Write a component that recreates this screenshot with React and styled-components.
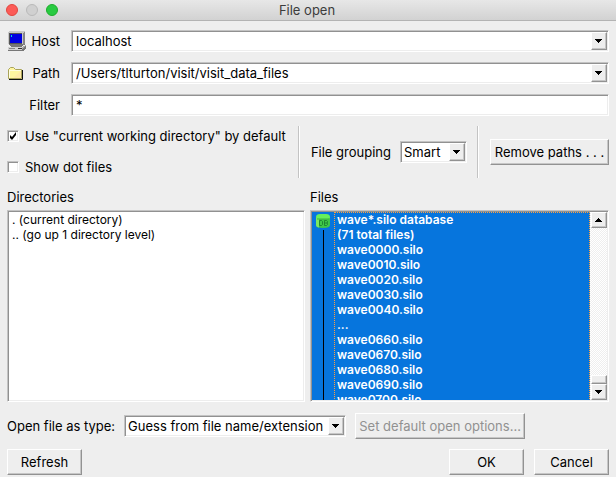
import React, { useState } from "react";
import styled, { createGlobalStyle, css } from "styled-components";

const GlobalStyle = createGlobalStyle`
  * { box-sizing: border-box; }
  html, body, #root { height: 100%; }
  body {
    margin: 0;
    background: #eeeeee;
    color: #000;
    font: 13px/16px Inter, "Liberation Sans", sans-serif;
  }
  button, input, select { font: inherit; color: inherit; border-radius: 0; margin: 0; }
`;

const sunken = css`
  border: 1px solid;
  border-color: #c3c3c3 #fff #fff #c3c3c3;
  box-shadow: inset 1px 1px 0 #919191, inset -1px -1px 0 #ededed;
`;

const raised = css`
  border: 1px solid;
  border-color: #fff #929292 #929292 #fff;
  box-shadow: inset -1px -1px 0 #c6c6c6;
  background: #eeeeee;
`;

const Window = styled.main`
  min-height: 100%;
  display: flex;
  flex-direction: column;
`;

const TitleBar = styled.header`
  flex: none;
  height: 21px;
  padding: 0 8px 0 6px;
  display: grid;
  grid-template-columns: 1fr auto 1fr;
  align-items: center;
  background: linear-gradient(#e7e7e7, #d2d2d2);
  border-bottom: 1px solid #b3b3b3;
`;

const Title = styled.h1`
  margin: 0;
  font-size: 13px;
  line-height: 16px;
  font-weight: 400;
  color: #3c3c3c;
`;

const Lights = styled.div`
  display: flex;
  gap: 8px;
`;

const Light = styled.button`
  width: 12px;
  height: 12px;
  padding: 0;
  border-radius: 50%;
  border: 1px solid ${(p) => p.$edge};
  background: ${(p) => p.$fill};
`;

const Content = styled.form`
  flex: 1;
  display: flex;
  flex-direction: column;
  padding: 9px 7px 2px;
`;

const Fields = styled.div`
  display: grid;
  grid-template-columns: 20px auto 1fr;
  row-gap: 10px;
  align-items: center;
`;

const FieldLabel = styled.label`
  grid-column: 2;
  min-width: 33px;
  text-align: right;
`;

const FieldBox = styled.div`
  ${sunken}
  grid-column: 3;
  margin-left: 11px;
  display: flex;
  height: 22px;
  padding: 1px;
  background: #fff;
`;

const TextInput = styled.input`
  flex: 1;
  min-width: 0;
  border: 0;
  outline: 0;
  padding: 0 3px;
  background: transparent;
`;

const ArrowButton = styled.button`
  ${raised}
  flex: none;
  width: 16px;
  height: ${(p) => p.$height || 18}px;
  padding: 0;
  display: grid;
  place-items: center;
`;

const ArrowFace = styled.span`
  ${raised}
  grid-area: 1 / 1;
  justify-self: end;
  width: 16px;
  height: 18px;
  display: grid;
  place-items: center;
  pointer-events: none;
`;

const Options = styled.div`
  display: grid;
  grid-template-columns: 1fr auto auto auto auto;
  align-items: center;
  height: 54px;
  margin-top: 9px;
`;

const Checks = styled.div`
  display: flex;
  flex-direction: column;
  gap: 15px;
  padding-bottom: 1px;
`;

const CheckLabel = styled.label`
  display: flex;
  align-items: center;
  gap: 6px;
`;

const CheckBox = styled.input`
  ${sunken}
  appearance: none;
  flex: none;
  width: 12px;
  height: 12px;
  margin: 0;
  background: #fff;
  &:checked {
    background: #fff url("data:image/svg+xml,%3Csvg xmlns='http://www.w3.org/2000/svg' viewBox='0 0 10 10'%3E%3Cpath d='M2 4v3l2 2 4-5V1L4 6z'/%3E%3C/svg%3E") center / 10px 10px no-repeat;
  }
`;

const Divider = styled.div`
  align-self: stretch;
  width: 2px;
  margin: 1px 0;
  background: linear-gradient(90deg, #c3c3c3 50%, #fff 50%);
`;

const Grouping = styled.div`
  display: flex;
  align-items: center;
  gap: 9px;
  padding: 0 10px 0 11px;
`;

const GroupingAction = styled.div`
  padding-left: 11px;
`;

const SelectBox = styled.div`
  ${sunken}
  display: grid;
  width: ${(p) => p.$width}px;
  height: 22px;
  padding: 1px;
  background: #fff;
`;

const Select = styled.select`
  appearance: none;
  grid-area: 1 / 1;
  min-width: 0;
  border: 0;
  outline: 0;
  padding: 0 16px 0 2px;
  background: transparent;
`;

const PushButton = styled.button`
  ${raised}
  height: 26px;
  width: ${(p) => p.$width}px;
  padding: 0;
  white-space: nowrap;
  &:disabled { color: #919191; }
`;

const Lists = styled.div`
  flex: 1;
  display: grid;
  grid-template-columns: 298fr 299fr;
  grid-template-rows: 16px minmax(0, 1fr);
  gap: 5px;
  margin-top: 10px;
  min-height: 0;
`;

const ListTitle = styled.h2`
  margin: 0;
  font-size: 13px;
  line-height: 16px;
  font-weight: 400;
`;

const ListPane = styled.div`
  ${sunken}
  min-width: 0;
  height: 192px;
  padding: 1px;
  display: flex;
  overflow: hidden;
  background: #fff;
`;

const Directories = styled.ul`
  flex: 1;
  margin: 0;
  padding: 0 3px;
  list-style: none;
  font-size: 12px;
  line-height: 15px;
`;

const FileItems = styled.ul`
  flex: 1;
  min-width: 0;
  margin: 0;
  padding: 0;
  list-style: none;
  overflow: hidden;
`;

const FileGroup = styled.li`
  display: flex;
  background: #0675dd;
  color: #fff;
`;

const GroupMark = styled.div`
  width: 22px;
  flex: none;
  display: flex;
  flex-direction: column;
  align-items: center;
  padding-top: 1px;
`;

const GroupLine = styled.div`
  flex: 1;
  width: 1px;
  margin-top: 1px;
  background: #000;
`;

const GroupText = styled.div`
  flex: 1;
  outline: 1px dotted #ffa040;
  outline-offset: -1px;
  padding-left: 3px;
  font-size: 12px;
  line-height: 15px;
  font-weight: 600;
  white-space: pre-line;
`;

const ScrollBar = styled.div`
  flex: none;
  width: 17px;
  padding-left: 1px;
  display: flex;
  flex-direction: column;
  background: repeating-conic-gradient(#eeeeee 0 25%, #fff 0 50%) 0 0 / 2px 2px;
`;

const ScrollThumb = styled.div`
  ${raised}
  height: 9px;
  margin-top: auto;
`;

const TypeRow = styled.div`
  display: flex;
  align-items: center;
  margin-top: 10px;
  gap: 9px;
`;

const Actions = styled.footer`
  display: flex;
  gap: 10px;
  margin-top: 10px;
`;

const Spacer = styled.div`
  flex: 1;
`;

const Arrow = ({ up }) => (
  <svg width="8" height="4" viewBox="0 0 8 4" shapeRendering="crispEdges" aria-hidden="true">
    <path d={up ? "M3 0h1v1h1v1h1v1h1v1H0V3h1V2h1V1h1z" : "M0 0h7v1H6v1H5v1H4v1H3V3H2V2H1V1H0z"} />
  </svg>
);

const HostIcon = () => (
  <svg width="20" height="20" viewBox="0 0 20 20" shapeRendering="crispEdges" aria-hidden="true">
    <path d="M2 1h16v13h-2v1l-2 1H4l-2-2z" fill="#777" />
    <path d="M1 1L3 0h15l-2 2v11H1z" fill="#c8c8c8" />
    <path d="M16 2l2-2v12l-2 2z" fill="#858585" />
    <path d="M2 2h13v11H2z" fill="#555" />
    <path d="M3 3h12v9H3z" fill="#0000e0" />
    <path d="M4 4h1v2H4z" fill="#00e5d0" />
    <path d="M1 16h14l4-2v3l-3 3H1z" fill="#777" />
    <path d="M1 16h14v3H1z" fill="#d2d2d2" />
    <path d="M2 17h6v1H2z" fill="#888" />
    <path d="M11 17h4v1h-4z" fill="#333" />
    <path d="M15 16l4-2v1l-4 3z" fill="#aaa" />
  </svg>
);

const FolderIcon = () => (
  <svg width="18" height="14" viewBox="0 0 18 14" aria-hidden="true">
    <path d="M1.5 12.5v-9l2-2h3l2 2h6v9z" fill="#fff6a0" stroke="#a9a35a" />
    <path d="M2 4.5h12M2.5 4v8" stroke="#fffde0" fill="none" />
    <path d="M6 12l8-7v7z" fill="#ffe9a8" />
    <path d="M15.5 4v9.500H2" stroke="#111" fill="none" />
  </svg>
);

const DatabaseIcon = () => (
  <svg width="16" height="16" viewBox="0 0 16 16" aria-hidden="true">
    <path d="M1 4v8q0 3 7 3t7-3V4z" fill="#3fc848" />
    <path d="M1 4v8q0 2 3 2.500V6z" fill="#7be860" />
    <path d="M1 4q0-3 4-3h6q4 0 4 3 0 2-4 2H5Q1 6 1 4z" fill="#66f05b" />
    <path d="M2 6h12" stroke="#3ab53f" fill="none" />
    <path d="M4.500 7.500v5h2l1-1v-3l-1-1zM9.500 7.500v5h2l1-1v-1l-1-.5 1-.5v-1l-1-1zM9.500 10h2" fill="none" stroke="#18782e" strokeWidth=".8" />
  </svg>
);

const files = [
  "wave*.silo database", "(71 total files)", "wave0000.silo", "wave0010.silo",
  "wave0020.silo", "wave0030.silo", "wave0040.silo", "...", "wave0660.silo",
  "wave0670.silo", "wave0680.silo", "wave0690.silo", "wave0700.silo",
];

function Field({ id, label, icon, initial, combo }) {
  const [value, setValue] = useState(initial);
  return (
    <>
      {icon}
      <FieldLabel htmlFor={id}>{label}</FieldLabel>
      <FieldBox>
        <TextInput id={id} value={value} onChange={(e) => setValue(e.target.value)} />
        {combo && <ArrowButton type="button" aria-label={`${label} history`}><Arrow /></ArrowButton>}
      </FieldBox>
    </>
  );
}

function DropDown({ id, width, option }) {
  return (
    <SelectBox $width={width}>
      <Select id={id}><option>{option}</option></Select>
      <ArrowFace><Arrow /></ArrowFace>
    </SelectBox>
  );
}

export default function App() {
  return (
    <Window>
      <GlobalStyle />
      <TitleBar>
        <Lights>
          <Light aria-label="Close" $fill="#fc5b57" $edge="#e2463f" />
          <Light aria-label="Minimize" $fill="#d0d0d0" $edge="#b9b9b9" />
          <Light aria-label="Zoom" $fill="#28ca41" $edge="#1dad2b" />
        </Lights>
        <Title>File open</Title>
      </TitleBar>
      <Content onSubmit={(e) => e.preventDefault()}>
        <Fields>
          <Field id="host" label="Host" icon={<HostIcon />} initial="localhost" combo />
          <Field id="path" label="Path" icon={<FolderIcon />} initial="/Users/tlturton/visit/visit_data_files" combo />
          <Field id="filter" label="Filter" initial="*" />
        </Fields>
        <Options>
          <Checks>
            <CheckLabel><CheckBox type="checkbox" defaultChecked />Use "current working directory" by default</CheckLabel>
            <CheckLabel><CheckBox type="checkbox" />Show dot files</CheckLabel>
          </Checks>
          <Divider />
          <Grouping>
            <label htmlFor="grouping">File grouping</label>
            <DropDown id="grouping" width={67} option="Smart" />
          </Grouping>
          <Divider />
          <GroupingAction>
            <PushButton type="button" $width={119}>Remove paths . . .</PushButton>
          </GroupingAction>
        </Options>
        <Lists>
          <ListTitle>Directories</ListTitle>
          <ListTitle>Files</ListTitle>
          <ListPane>
            <Directories>
              <li>. (current directory)</li>
              <li>.. (go up 1 directory level)</li>
            </Directories>
          </ListPane>
          <ListPane>
            <FileItems>
              <FileGroup>
                <GroupMark><DatabaseIcon /><GroupLine /></GroupMark>
                <GroupText>{files.join("\n")}</GroupText>
              </FileGroup>
            </FileItems>
            <ScrollBar>
              <ArrowButton type="button" aria-label="Scroll up" $height={16}><Arrow up /></ArrowButton>
              <ScrollThumb />
              <ArrowButton type="button" aria-label="Scroll down" $height={16}><Arrow /></ArrowButton>
            </ScrollBar>
          </ListPane>
        </Lists>
        <TypeRow>
          <label htmlFor="type">Open file as type:</label>
          <DropDown id="type" width={222} option="Guess from file name/extension" />
          <PushButton type="button" disabled $width={170}>Set default open options...</PushButton>
        </TypeRow>
        <Actions>
          <PushButton type="button" $width={75}>Refresh</PushButton>
          <Spacer />
          <PushButton type="submit" $width={75}>OK</PushButton>
          <PushButton type="button" $width={75}>Cancel</PushButton>
        </Actions>
      </Content>
    </Window>
  );
}
